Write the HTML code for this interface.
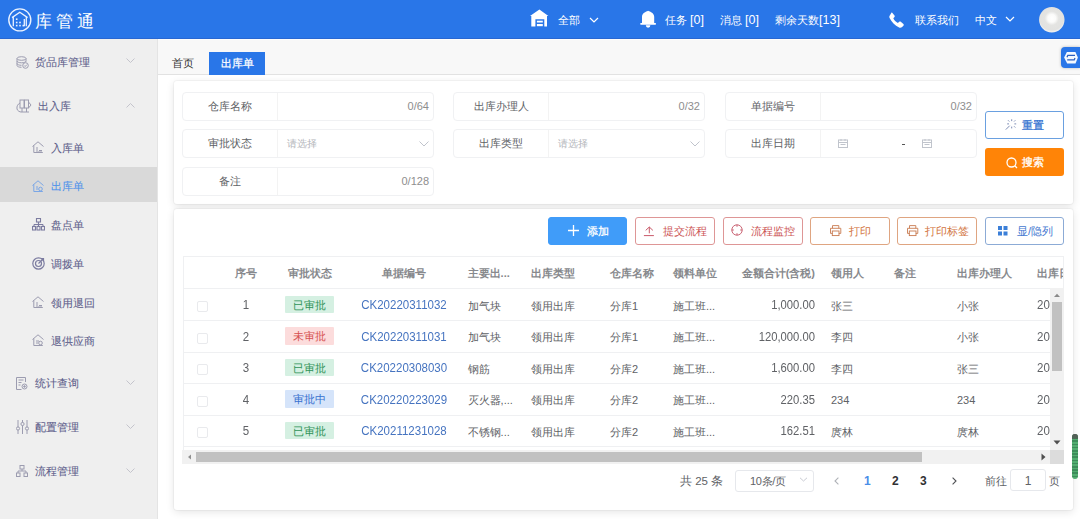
<!DOCTYPE html>
<html><head><meta charset="utf-8">
<style>
*{box-sizing:border-box;margin:0;padding:0}
html,body{width:1080px;height:519px;overflow:hidden}
body{position:relative;font-family:"Liberation Sans",sans-serif;font-size:11px;color:#606266;background:#fff}
.abs{position:absolute}
#hdr{left:0;top:0;width:1080px;height:39px;background:#2976e8;color:#fff;font-weight:500}
#side{left:0;top:39px;width:158px;height:480px;background:#efefef;border-right:1px solid #e4e4e4}
#tabs{left:158px;top:39px;width:923px;height:36px;background:#f8f8f8;border-top:1px solid #fdfdfd;border-bottom:1px solid #e2e2e2}
.card{background:#fff;box-shadow:0 0 0 1px rgba(0,0,0,.03),0 2px 9px rgba(0,0,0,.11);border-radius:3px}
.fld{position:absolute;height:29px;border:1px solid #f0f1f3;border-radius:4px;background:#fff}
.fld .lb{position:absolute;left:0;top:0;width:95px;height:27px;border-right:1px solid #f3f3f3;text-align:center;line-height:27px;color:#606266}
.fld .cnt{position:absolute;right:4px;top:0;line-height:27px;color:#8e8e8e;font-size:11px}
.fld .ph{position:absolute;left:104px;top:0;line-height:27px;color:#b4b6bb;font-size:10.3px}
.t{position:absolute;white-space:nowrap}
.menu{position:absolute;color:#5f5f8c;font-size:11px;line-height:14px;-webkit-text-stroke:0.08px currentColor}
.btn{position:absolute;top:216.5px;height:28px;border-radius:3px;border:1px solid;background:#fff;line-height:26px;font-size:11px}
.row{position:absolute;left:183px;width:867px;height:32px;border-bottom:1px solid #ebeef5}
.c{position:absolute;white-space:nowrap;line-height:14px;font-size:11px;color:#606266}
.tag{position:absolute;width:49px;height:17.5px;line-height:19px;text-align:center;font-size:11px;border-radius:1px}
</style></head><body>

<!-- header -->
<div id="hdr" class="abs">
  <svg class="abs" style="left:8px;top:8px" width="24" height="24" viewBox="0 0 24 24">
    <circle cx="11.8" cy="11.9" r="11" fill="none" stroke="#eaf2ff" stroke-width="1.4"/>
    <path d="M4 9.6L11.8 4.2L19.6 9.6M5.3 8.8V18.3M18.3 8.8V18.3M16.3 11V18.3" fill="none" stroke="#eaf2ff" stroke-width="1.3"/>
    <g fill="#eaf2ff"><rect x="7.9" y="10.4" width="1.6" height="1.6"/><rect x="7.9" y="13.7" width="1.6" height="1.6"/><rect x="11.2" y="13.7" width="1.6" height="1.6"/><rect x="7.9" y="16.8" width="1.6" height="1.6"/><rect x="11.2" y="16.8" width="1.6" height="1.6"/><rect x="14.5" y="16.8" width="1.6" height="1.6"/></g>
  </svg>
  <div class="t" style="left:35px;top:10.5px;font-size:17px;letter-spacing:4px;line-height:22px">库管通</div>
  <!-- right nav -->
  <svg class="abs" style="left:530px;top:9px" width="19" height="18" viewBox="0 0 19 18"><path d="M9.4 0.6L18.4 6.9H17V17.6H14.3V10.2H5.4V17.6H1.3V6.9H0z" fill="#fff"/><rect x="6.9" y="11.7" width="5.9" height="1.8" fill="#fff"/><rect x="6.9" y="15" width="5.9" height="2.2" fill="#fff"/></svg>
  <div class="t" style="left:558px;top:12.5px;line-height:14px">全部</div>
  <svg class="abs" style="left:589px;top:17px" width="10" height="7" viewBox="0 0 10 7"><path d="M1 1l4 4 4-4" fill="none" stroke="#fff" stroke-width="1.2"/></svg>
  <svg class="abs" style="left:640px;top:10px" width="17" height="19" viewBox="0 0 17 19"><path d="M8.1 0.8C10.5 1.8 14.2 3.3 14.2 6.8V13H2V6.8C2 3.3 5.7 1.8 8.1 0.8Z" fill="#fff"/><rect x="0.2" y="12.9" width="15.8" height="1.9" rx=".8" fill="#fff"/><path d="M5.8 15.2H10.4A2.3 2.5 0 0 1 5.8 15.2Z" fill="#fff"/></svg>
  <div class="t" style="left:665px;top:12.5px;line-height:14px">任务 <span style="font-size:12.5px">[0]</span></div>
  <div class="t" style="left:720px;top:12.5px;line-height:14px">消息 <span style="font-size:12.5px">[0]</span></div>
  <div class="t" style="left:775px;top:12.5px;line-height:14px">剩余天数<span style="font-size:12.5px">[13]</span></div>
  <svg class="abs" style="left:889px;top:12px" width="16" height="16" viewBox="0 0 16 16"><path d="M3.2 0.8l2.3 2.6c.4.5.4 1.1 0 1.6L4.3 6.2c.9 2 2.5 3.7 4.6 4.7l1.3-1.2c.5-.4 1.1-.4 1.6 0l2.6 2.3c.5.5.5 1.2 0 1.7l-1.3 1.3c-.8.8-2 1-3 .5C6 13.7 2.4 10 .6 6.1c-.5-1-.3-2.2.5-3L2.4.8c.3-.3.6-.3.8 0z" fill="#fff"/></svg>
  <div class="t" style="left:915px;top:12.5px;line-height:14px">联系我们</div>
  <div class="t" style="left:975px;top:12.5px;line-height:14px">中文</div>
  <svg class="abs" style="left:1005px;top:16px" width="10" height="7" viewBox="0 0 10 7"><path d="M1 1l4 4 4-4" fill="none" stroke="#fff" stroke-width="1.2"/></svg>
  <svg class="abs" style="left:1039px;top:7px" width="26" height="26" viewBox="0 0 26 26"><defs><radialGradient id="av" cx="50%" cy="44%" r="55%"><stop offset="0" stop-color="#fff"/><stop offset=".28" stop-color="#fbfbfa"/><stop offset=".5" stop-color="#e4e4e2"/><stop offset=".85" stop-color="#e2e2e0"/><stop offset="1" stop-color="#f2f2f2"/></radialGradient></defs><circle cx="12.8" cy="12.8" r="12.7" fill="url(#av)"/></svg>
</div>

<div class="abs" style="left:0;top:37.5px;width:1080px;height:1.5px;background:#2867d2"></div>
<!-- sidebar -->
<div id="side" class="abs"></div>
<div class="abs" style="left:0;top:167px;width:157px;height:35px;background:#d9d9d9"></div>


<!-- sidebar menu -->
<svg class="abs" style="left:16px;top:56px" width="13" height="13" viewBox="0 0 13 13" fill="none" stroke="#9c9cb0" stroke-width="1"><ellipse cx="5.5" cy="2.5" rx="4.5" ry="1.8"/><path d="M1 2.5v7c0 1 2 1.8 4.5 1.8M10 2.5v3M1 5c0 1 2 1.8 4.5 1.8S10 6 10 5M1 7.5c0 1 2 1.8 4.5 1.8"/><circle cx="9.5" cy="9.5" r="2.8" fill="#efefef"/><path d="M8.2 9.5l1 1 1.6-1.8"/></svg>
<div class="menu" style="left:35px;top:55px">货品库管理</div>
<svg class="abs" style="left:126px;top:58px" width="9" height="5" viewBox="0 0 9 5"><path d="M.5.5l4 4 4-4" fill="none" stroke="#c4c4cc" stroke-width="1"/></svg>
<svg class="abs" style="left:16px;top:99px" width="16" height="14" viewBox="0 0 16 14" fill="none" stroke="#9c9cb0" stroke-width="1"><rect x="4" y="1" width="4" height="8"/><rect x="8.5" y="1" width="4" height="8"/><path d="M12.5 3l2.5 3-2.5 3M4 4c-2 1-3.5 3-3 6 .5 2 3 3 4 3h8"/><path d="M6 9v4M10.5 9v4"/></svg>
<div class="menu" style="left:38px;top:99px">出入库</div>
<svg class="abs" style="left:126px;top:103px" width="9" height="5" viewBox="0 0 9 5"><path d="M.5 4.5l4-4 4 4" fill="none" stroke="#c4c4cc" stroke-width="1"/></svg>

<svg class="abs" style="left:32px;top:141px" width="12" height="12" viewBox="0 0 12 12" fill="none" stroke="#9c9cb0" stroke-width="1"><path d="M.5 5.5L6 .8l5.5 4.7M1.8 4.5v7h9"/><path d="M4 7h2M4 9h2M7 9.5h3M4 11h6"/></svg>
<div class="menu" style="left:51px;top:141px">入库单</div>
<svg class="abs" style="left:32px;top:180px" width="12" height="12" viewBox="0 0 12 12" fill="none" stroke="#7aa6e6" stroke-width="1"><path d="M.5 5.5L6 .8l5.5 4.7M1.8 4.5v7h9"/><path d="M4 7h2M4 9h2"/><circle cx="8.5" cy="9" r="1.8"/></svg>
<div class="menu" style="left:51px;top:179px;color:#4f92ea">出库单</div>
<svg class="abs" style="left:32px;top:218px" width="13" height="13" viewBox="0 0 13 13" fill="none" stroke="#7c7ca0" stroke-width="1.1"><rect x="4.5" y=".5" width="4" height="3.5"/><path d="M6.5 4v2.5M2 6.5h9M2 6.5v2M11 6.5v2M6.5 6.5v2"/><rect x=".5" y="8.5" width="3" height="3.5"/><rect x="5" y="8.5" width="3" height="3.5"/><rect x="9.5" y="8.5" width="3" height="3.5"/></svg>
<div class="menu" style="left:51px;top:218px">盘点单</div>
<svg class="abs" style="left:32px;top:257px" width="13" height="13" viewBox="0 0 13 13" fill="none" stroke="#7c7ca0" stroke-width="1.2"><circle cx="6.5" cy="6.5" r="5.7"/><circle cx="6.5" cy="6.5" r="3"/><path d="M6.5 6.5L11 2M9 1.5h2.5V4"/></svg>
<div class="menu" style="left:51px;top:257px">调拨单</div>
<svg class="abs" style="left:32px;top:296px" width="12" height="12" viewBox="0 0 12 12" fill="none" stroke="#9c9cb0" stroke-width="1"><path d="M.5 5.5L6 .8l5.5 4.7M1.8 4.5v7h9"/><path d="M4 7h2M4 9h2M7 9.5h3M4 11h6"/></svg>
<div class="menu" style="left:51px;top:296px">领用退回</div>
<svg class="abs" style="left:32px;top:334px" width="12" height="12" viewBox="0 0 12 12" fill="none" stroke="#9c9cb0" stroke-width="1"><path d="M.5 5.5L6 .8l5.5 4.7M1.8 4.5v7h9"/><path d="M4 7h3M4 9h2"/><circle cx="8.5" cy="9" r="1.8"/></svg>
<div class="menu" style="left:51px;top:334px">退供应商</div>

<svg class="abs" style="left:16px;top:377px" width="12" height="13" viewBox="0 0 12 13" fill="none" stroke="#9c9cb0" stroke-width="1"><path d="M9.5 5V.5H.5v12h5"/><path d="M2.5 3h5M2.5 5.5h3M2.5 8h2"/><circle cx="8.5" cy="9.5" r="2.5"/><circle cx="8.5" cy="9.5" r=".8" fill="#9c9cb0"/></svg>
<div class="menu" style="left:35px;top:376px">统计查询</div>
<svg class="abs" style="left:126px;top:380px" width="9" height="5" viewBox="0 0 9 5"><path d="M.5.5l4 4 4-4" fill="none" stroke="#c4c4cc" stroke-width="1"/></svg>
<svg class="abs" style="left:16px;top:420px" width="13" height="14" viewBox="0 0 13 14" fill="none" stroke="#9c9cb0" stroke-width="1"><path d="M2 0v14M6.5 0v14M11 0v14"/><circle cx="2" cy="8.5" r="1.6" fill="#efefef"/><circle cx="6.5" cy="4" r="1.6" fill="#efefef"/><circle cx="11" cy="8.5" r="1.6" fill="#efefef"/></svg>
<div class="menu" style="left:35px;top:420px">配置管理</div>
<svg class="abs" style="left:126px;top:424px" width="9" height="5" viewBox="0 0 9 5"><path d="M.5.5l4 4 4-4" fill="none" stroke="#c4c4cc" stroke-width="1"/></svg>
<svg class="abs" style="left:16px;top:465px" width="12" height="12" viewBox="0 0 12 12" fill="none" stroke="#9c9cb0" stroke-width="1"><rect x="4" y=".5" width="4" height="3.5"/><path d="M6 4v2M2 6h8M2 6v2M10 6v2"/><rect x=".5" y="8" width="3.5" height="3.5"/><rect x="8" y="8" width="3.5" height="3.5"/></svg>
<div class="menu" style="left:35px;top:464px">流程管理</div>
<svg class="abs" style="left:126px;top:468px" width="9" height="5" viewBox="0 0 9 5"><path d="M.5.5l4 4 4-4" fill="none" stroke="#c4c4cc" stroke-width="1"/></svg>

<!-- tabs -->
<div id="tabs" class="abs"></div>
<div class="t" style="left:172px;top:57px;line-height:12px;color:#333">首页</div>
<div class="abs" style="left:209px;top:52px;width:56px;height:23px;background:#2976e8;color:#fff;text-align:center;line-height:22px;-webkit-text-stroke:0.25px #fff">出库单</div>


<!-- search card -->
<div class="abs card" style="left:174px;top:81px;width:899px;height:123px"></div>


<!-- search fields -->
<div class="fld" style="left:182px;top:92px;width:252px"><div class="lb">仓库名称</div><div class="cnt">0/64</div></div>
<div class="fld" style="left:453px;top:92px;width:252px"><div class="lb">出库办理人</div><div class="cnt">0/32</div></div>
<div class="fld" style="left:725px;top:92px;width:252px"><div class="lb">单据编号</div><div class="cnt">0/32</div></div>
<div class="fld" style="left:182px;top:129px;width:252px"><div class="lb">审批状态</div><div class="ph">请选择</div>
 <svg class="abs" style="left:236px;top:11px" width="10" height="6" viewBox="0 0 10 6"><path d="M.5.5l4.5 4.5 4.5-4.5" fill="none" stroke="#c0c4cc" stroke-width="1"/></svg></div>
<div class="fld" style="left:453px;top:129px;width:252px"><div class="lb">出库类型</div><div class="ph">请选择</div>
 <svg class="abs" style="left:236px;top:11px" width="10" height="6" viewBox="0 0 10 6"><path d="M.5.5l4.5 4.5 4.5-4.5" fill="none" stroke="#c0c4cc" stroke-width="1"/></svg></div>
<div class="fld" style="left:725px;top:129px;width:252px"><div class="lb">出库日期</div>
 <svg class="abs" style="left:112px;top:9px" width="10" height="9" viewBox="0 0 10 9" fill="none" stroke="#c0c4cc" stroke-width="1"><rect x=".5" y="1" width="9" height="7.5"/><path d="M.5 3.5h9M3 0v2M7 0v2M2.5 5.5h5"/></svg>
 <div class="abs" style="left:176px;top:14px;width:3px;height:1px;background:#555"></div>
 <svg class="abs" style="left:196px;top:9px" width="10" height="9" viewBox="0 0 10 9" fill="none" stroke="#c0c4cc" stroke-width="1"><rect x=".5" y="1" width="9" height="7.5"/><path d="M.5 3.5h9M3 0v2M7 0v2M2.5 5.5h5"/></svg>
</div>
<div class="fld" style="left:182px;top:167px;width:252px"><div class="lb">备注</div><div class="cnt">0/128</div></div>

<div class="abs" style="left:985px;top:111px;width:79px;height:28px;border:1px solid #6aa0e0;border-radius:3px;background:#fff;color:#2f6fd0;line-height:26px;-webkit-text-stroke:0.25px #2f6fd0">
 <svg class="abs" style="left:19px;top:5px" width="14" height="16" viewBox="0 0 14 16" fill="none" stroke="#7d8cb4" stroke-width="1"><path d="M6.7 2.3v1.8M6.7 9.6v1.8M2.2 6.9h1.8M9.4 6.9h1.8M9.1 4.5l1.2-1.2M9.1 9.3l1.2 1.2M4.3 4.5L3.1 3.3M0.8 12.6L4.7 8.7"/></svg>
 <span class="abs" style="left:36px;top:0">重置</span></div>
<div class="abs" style="left:985px;top:148px;width:79px;height:28px;border-radius:3px;background:#ff8407;color:#fff;line-height:29px;-webkit-text-stroke:0.3px #fff">
 <svg class="abs" style="left:20.5px;top:8.5px" width="12" height="12" viewBox="0 0 12 12" fill="none" stroke="#fff" stroke-width="1.3"><circle cx="5.5" cy="5.5" r="4.5"/><path d="M8.8 8.8L11 11"/></svg>
 <span class="abs" style="left:37px;top:0">搜索</span></div>

<!-- table card -->
<div class="abs card" style="left:174px;top:209px;width:899px;height:301px"></div>


<!-- action buttons -->
<div class="btn" style="left:548px;width:79px;background:#409cf9;border-color:#409cf9;color:#fff;-webkit-text-stroke:0.3px #fff">
 <svg class="abs" style="left:19px;top:7px" width="11" height="11" viewBox="0 0 11 11"><path d="M5.5 0v11M0 5.5h11" stroke="#fff" stroke-width="1.3"/></svg>
 <span class="abs" style="left:38px;top:0">添加</span></div>
<div class="btn" style="left:635px;width:80px;border-color:#de9696;color:#cc5555">
 <svg class="abs" style="left:7px;top:8px" width="12" height="12" viewBox="0 0 12 12" fill="none" stroke="#c95a6a" stroke-width="1"><path d="M0.9 9.6h10M6.3 7.3V1M2.7 4.4L6.3 1l3.6 3.4"/></svg>
 <span class="abs" style="left:27px;top:0">提交流程</span></div>
<div class="btn" style="left:723px;width:80px;border-color:#de9696;color:#cc5555">
 <svg class="abs" style="left:7px;top:6.5px" width="12" height="12" viewBox="0 0 12 12" fill="none" stroke="#c45566" stroke-width=".9"><circle cx="6" cy="6" r="5.2"/><path d="M6 .8v2M6 9.2v2M.8 6h2M9.2 6h2"/></svg>
 <span class="abs" style="left:27px;top:0">流程监控</span></div>
<div class="btn" style="left:810px;width:80px;border-color:#dfa581;color:#d2743e">
 <svg class="abs" style="left:19px;top:7.5px" width="12" height="12" viewBox="0 0 12 12" fill="none" stroke="#c87a50" stroke-width=".9"><path d="M2.5 3.3V.6h6.3v2.7M2.5 8.4H.5V3.3h10.3v5.1H8.8"/><rect x="2.3" y="6" width="6.7" height="4.6"/></svg>
 <span class="abs" style="left:38px;top:0">打印</span></div>
<div class="btn" style="left:897px;width:80px;border-color:#dfa581;color:#d2743e">
 <svg class="abs" style="left:9px;top:7.5px" width="12" height="12" viewBox="0 0 12 12" fill="none" stroke="#c87a50" stroke-width=".9"><path d="M2.5 3.3V.6h6.3v2.7M2.5 8.4H.5V3.3h10.3v5.1H8.8"/><rect x="2.3" y="6" width="6.7" height="4.6"/></svg>
 <span class="abs" style="left:27px;top:0">打印标签</span></div>
<div class="btn" style="left:985px;width:79px;border-color:#8cabd6;color:#4478d0">
 <svg class="abs" style="left:12px;top:8.5px" width="10" height="10" viewBox="0 0 10 10" fill="#3b7fd8"><rect x="0" y="0" width="4" height="4"/><rect x="5.5" y="0" width="4" height="4"/><rect x="0" y="5.5" width="4" height="4"/><rect x="5.5" y="5.5" width="4" height="4"/></svg>
 <span class="abs" style="left:31px;top:0">显/隐列</span></div>


<!-- table -->
<div class="abs" style="left:183px;top:256px;width:881px;height:1px;background:#eff0f2"></div>
<div class="abs" style="left:183px;top:256px;width:1px;height:194px;background:#eff0f2"></div>
<div class="abs" style="left:1063px;top:256px;width:1px;height:32px;background:#eff0f2"></div>
<div class="abs" style="left:0;top:0;width:1063px;height:288px;overflow:hidden">
<div class="c" style="left:186px;width:120px;text-align:center;top:266px;color:#87898d;font-weight:bold">序号</div>
<div class="c" style="left:249.5px;width:120px;text-align:center;top:266px;color:#87898d;font-weight:bold">审批状态</div>
<div class="c" style="left:343.7px;width:120px;text-align:center;top:266px;color:#87898d;font-weight:bold">单据编号</div>
<div class="c" style="left:467.6px;top:266px;color:#87898d;font-weight:bold">主要出...</div>
<div class="c" style="left:531px;top:266px;color:#87898d;font-weight:bold">出库类型</div>
<div class="c" style="left:610px;top:266px;color:#87898d;font-weight:bold">仓库名称</div>
<div class="c" style="left:673px;top:266px;color:#87898d;font-weight:bold">领料单位</div>
<div class="c" style="left:695px;width:120px;text-align:right;top:266px;color:#87898d;font-weight:bold">金额合计(含税)</div>
<div class="c" style="left:831px;top:266px;color:#87898d;font-weight:bold">领用人</div>
<div class="c" style="left:894px;top:266px;color:#87898d;font-weight:bold">备注</div>
<div class="c" style="left:957px;top:266px;color:#87898d;font-weight:bold">出库办理人</div>
<div class="c" style="left:1037px;top:266px;color:#87898d;font-weight:bold">出库日期</div>
</div>
<div class="abs" style="left:184px;top:288px;width:879px;height:1px;background:#eff0f2"></div>
<div class="abs" style="left:0;top:0;width:1050px;height:450px;overflow:hidden">
<div class="abs" style="left:184px;top:320.08px;width:866px;height:1px;background:#eff0f2"></div>
<div class="abs" style="left:197px;top:301.0px;width:11px;height:11px;border:1px solid #e9eaed;border-radius:2px;background:#fff"></div>
<div class="c" style="left:186px;width:120px;text-align:center;top:298.0px;font-size:12.5px;transform:scaleX(.92)">1</div>
<div class="tag" style="left:285px;top:295.5px;background:#d5f0e2;color:#2f9358">已审批</div>
<div class="c" style="left:344px;width:120px;text-align:center;top:298.0px;color:#4674c0;font-size:12.5px;transform:scaleX(.92)">CK20220311032</div>
<div class="c" style="left:467.6px;top:298.5px;">加气块</div>
<div class="c" style="left:531px;top:298.5px;">领用出库</div>
<div class="c" style="left:610px;top:298.5px;">分库1</div>
<div class="c" style="left:673px;top:298.5px;">施工班...</div>
<div class="c" style="left:695px;width:120px;text-align:right;top:298.0px;font-size:12.5px;transform:scaleX(.9);transform-origin:right center">1,000.00</div>
<div class="c" style="left:831px;top:298.5px;">张三</div>
<div class="c" style="left:957px;top:298.5px;">小张</div>
<div class="c" style="left:1037px;top:298.0px;font-size:12.5px;transform:scaleX(.92);transform-origin:left center">20</div>
<div class="abs" style="left:184px;top:351.66px;width:866px;height:1px;background:#eff0f2"></div>
<div class="abs" style="left:197px;top:332.58px;width:11px;height:11px;border:1px solid #e9eaed;border-radius:2px;background:#fff"></div>
<div class="c" style="left:186px;width:120px;text-align:center;top:329.58px;font-size:12.5px;transform:scaleX(.92)">2</div>
<div class="tag" style="left:285px;top:327.08px;background:#fcdcdc;color:#d65050">未审批</div>
<div class="c" style="left:344px;width:120px;text-align:center;top:329.58px;color:#4674c0;font-size:12.5px;transform:scaleX(.92)">CK20220311031</div>
<div class="c" style="left:467.6px;top:330.08px;">加气块</div>
<div class="c" style="left:531px;top:330.08px;">领用出库</div>
<div class="c" style="left:610px;top:330.08px;">分库1</div>
<div class="c" style="left:673px;top:330.08px;">施工班...</div>
<div class="c" style="left:695px;width:120px;text-align:right;top:329.58px;font-size:12.5px;transform:scaleX(.9);transform-origin:right center">120,000.00</div>
<div class="c" style="left:831px;top:330.08px;">李四</div>
<div class="c" style="left:957px;top:330.08px;">小张</div>
<div class="c" style="left:1037px;top:329.58px;font-size:12.5px;transform:scaleX(.92);transform-origin:left center">20</div>
<div class="abs" style="left:184px;top:383.24px;width:866px;height:1px;background:#eff0f2"></div>
<div class="abs" style="left:197px;top:364.16px;width:11px;height:11px;border:1px solid #e9eaed;border-radius:2px;background:#fff"></div>
<div class="c" style="left:186px;width:120px;text-align:center;top:361.16px;font-size:12.5px;transform:scaleX(.92)">3</div>
<div class="tag" style="left:285px;top:358.66px;background:#d5f0e2;color:#2f9358">已审批</div>
<div class="c" style="left:344px;width:120px;text-align:center;top:361.16px;color:#4674c0;font-size:12.5px;transform:scaleX(.92)">CK20220308030</div>
<div class="c" style="left:467.6px;top:361.66px;">钢筋</div>
<div class="c" style="left:531px;top:361.66px;">领用出库</div>
<div class="c" style="left:610px;top:361.66px;">分库2</div>
<div class="c" style="left:673px;top:361.66px;">施工班...</div>
<div class="c" style="left:695px;width:120px;text-align:right;top:361.16px;font-size:12.5px;transform:scaleX(.9);transform-origin:right center">1,600.00</div>
<div class="c" style="left:831px;top:361.66px;">李四</div>
<div class="c" style="left:957px;top:361.66px;">张三</div>
<div class="c" style="left:1037px;top:361.16px;font-size:12.5px;transform:scaleX(.92);transform-origin:left center">20</div>
<div class="abs" style="left:184px;top:414.82px;width:866px;height:1px;background:#eff0f2"></div>
<div class="abs" style="left:197px;top:395.74px;width:11px;height:11px;border:1px solid #e9eaed;border-radius:2px;background:#fff"></div>
<div class="c" style="left:186px;width:120px;text-align:center;top:392.74px;font-size:12.5px;transform:scaleX(.92)">4</div>
<div class="tag" style="left:285px;top:390.24px;background:#d5e4fa;color:#3670cf">审批中</div>
<div class="c" style="left:344px;width:120px;text-align:center;top:392.74px;color:#4674c0;font-size:12.5px;transform:scaleX(.92)">CK20220223029</div>
<div class="c" style="left:467.6px;top:393.24px;">灭火器,...</div>
<div class="c" style="left:531px;top:393.24px;">领用出库</div>
<div class="c" style="left:610px;top:393.24px;">分库2</div>
<div class="c" style="left:673px;top:393.24px;">施工班...</div>
<div class="c" style="left:695px;width:120px;text-align:right;top:392.74px;font-size:12.5px;transform:scaleX(.9);transform-origin:right center">220.35</div>
<div class="c" style="left:831px;top:393.24px;">234</div>
<div class="c" style="left:957px;top:393.24px;">234</div>
<div class="c" style="left:1037px;top:392.74px;font-size:12.5px;transform:scaleX(.92);transform-origin:left center">20</div>
<div class="abs" style="left:184px;top:446.4px;width:866px;height:1px;background:#eff0f2"></div>
<div class="abs" style="left:197px;top:427.32px;width:11px;height:11px;border:1px solid #e9eaed;border-radius:2px;background:#fff"></div>
<div class="c" style="left:186px;width:120px;text-align:center;top:424.32px;font-size:12.5px;transform:scaleX(.92)">5</div>
<div class="tag" style="left:285px;top:421.82px;background:#d5f0e2;color:#2f9358">已审批</div>
<div class="c" style="left:344px;width:120px;text-align:center;top:424.32px;color:#4674c0;font-size:12.5px;transform:scaleX(.92)">CK20211231028</div>
<div class="c" style="left:467.6px;top:424.82px;">不锈钢...</div>
<div class="c" style="left:531px;top:424.82px;">领用出库</div>
<div class="c" style="left:610px;top:424.82px;">分库2</div>
<div class="c" style="left:673px;top:424.82px;">施工班...</div>
<div class="c" style="left:695px;width:120px;text-align:right;top:424.32px;font-size:12.5px;transform:scaleX(.9);transform-origin:right center">162.51</div>
<div class="c" style="left:831px;top:424.82px;">庹林</div>
<div class="c" style="left:957px;top:424.82px;">庹林</div>
<div class="c" style="left:1037px;top:424.32px;font-size:12.5px;transform:scaleX(.92);transform-origin:left center">20</div>
</div>
<!-- scrollbars -->
<div class="abs" style="left:1050px;top:288px;width:14px;height:162px;background:#f1f1f1"></div>
<div class="abs" style="left:1052px;top:302px;width:10px;height:69px;background:#c1c1c1"></div>
<svg class="abs" style="left:1053px;top:293px" width="8" height="5" viewBox="0 0 8 5"><path d="M4 0.8L7 4H1z" fill="#8a8a8a"/></svg>
<svg class="abs" style="left:1053px;top:440px" width="8" height="5" viewBox="0 0 8 5"><path d="M4 4.5L7.5 .5H.5z" fill="#505050"/></svg>
<div class="abs" style="left:182px;top:450px;width:868px;height:14px;background:#f1f1f1"></div>
<div class="abs" style="left:196px;top:452px;width:726px;height:10px;background:#c1c1c1"></div>
<svg class="abs" style="left:187px;top:453px" width="5" height="8" viewBox="0 0 5 8"><path d="M1 4L4 1.5v5z" fill="#909090"/></svg>
<svg class="abs" style="left:1041px;top:453px" width="5" height="8" viewBox="0 0 5 8"><path d="M4.5 4L.5 .5v7z" fill="#505050"/></svg>
<div class="abs" style="left:1050px;top:450px;width:14px;height:14px;background:#dcdcdc"></div>


<!-- pagination -->
<div class="t" style="left:680px;top:474px;line-height:14px;font-size:11.5px;color:#606266">共 25 条</div>
<div class="abs" style="left:735px;top:470px;width:79px;height:22px;border:1px solid #e6e8ec;border-radius:3px;background:#fff"></div>
<div class="t" style="left:750px;top:474px;line-height:14px;color:#606266;letter-spacing:-0.3px">10条/页</div>
<svg class="abs" style="left:799px;top:476.5px" width="9" height="5" viewBox="0 0 9 5"><path d="M1 .8l3.5 3.2L8 .8" fill="none" stroke="#c8cbd2" stroke-width="1"/></svg>
<svg class="abs" style="left:834px;top:477px" width="5" height="8" viewBox="0 0 5 8"><path d="M4.4.6L1 4l3.4 3.4" fill="none" stroke="#b0b3b8" stroke-width="1.1"/></svg>
<div class="t" style="left:864px;top:474px;line-height:14px;font-size:12px;font-weight:bold;color:#4a8ee8">1</div>
<div class="t" style="left:892px;top:474px;line-height:14px;font-size:12px;font-weight:bold;color:#303133">2</div>
<div class="t" style="left:920px;top:474px;line-height:14px;font-size:12px;font-weight:bold;color:#303133">3</div>
<svg class="abs" style="left:951.5px;top:477px" width="5" height="8" viewBox="0 0 5 8"><path d="M.6.6l3.4 3.4-3.4 3.4" fill="none" stroke="#505256" stroke-width="1.1"/></svg>
<div class="t" style="left:985px;top:474px;line-height:14px;color:#606266">前往</div>
<div class="abs" style="left:1010px;top:469px;width:36px;height:22px;border:1px solid #e6e8ec;border-radius:3px;background:#fff;text-align:center;line-height:22px;font-size:12px;color:#606266">1</div>
<div class="t" style="left:1049px;top:474px;line-height:14px;color:#606266">页</div>


<svg class="abs" style="left:1061px;top:47px;filter:drop-shadow(0 0 1.5px rgba(0,0,0,.25))" width="19" height="21" viewBox="0 0 19 21"><path d="M4 0h15v21H4a4 4 0 0 1-4-4V4a4 4 0 0 1 4-4z" fill="#2976e8"/><polygon points="5.9,5.1 14.4,5.1 16.9,10.6 14.5,16.4 6.2,16.4 3.1,10.6" fill="#f4f9ff"/><path d="M14 8.3H6.8L6 10.2" fill="none" stroke="#2a5fc0" stroke-width="1.3"/><path d="M6.2 12.9H13.2L14 11" fill="none" stroke="#2a5fc0" stroke-width="1.3"/></svg>
<div class="abs" style="left:1072px;top:434px;width:6px;height:45px;border-radius:3px;background:repeating-linear-gradient(#3d8c5a 0 1.6px,#52ad70 1.6px 3.2px)"></div>
<div class="abs" style="left:1072px;top:434px;width:6px;height:5px;border-radius:3px 3px 0 0;background:linear-gradient(#5a5a5a,#4a6a55)"></div>

</body></html>
